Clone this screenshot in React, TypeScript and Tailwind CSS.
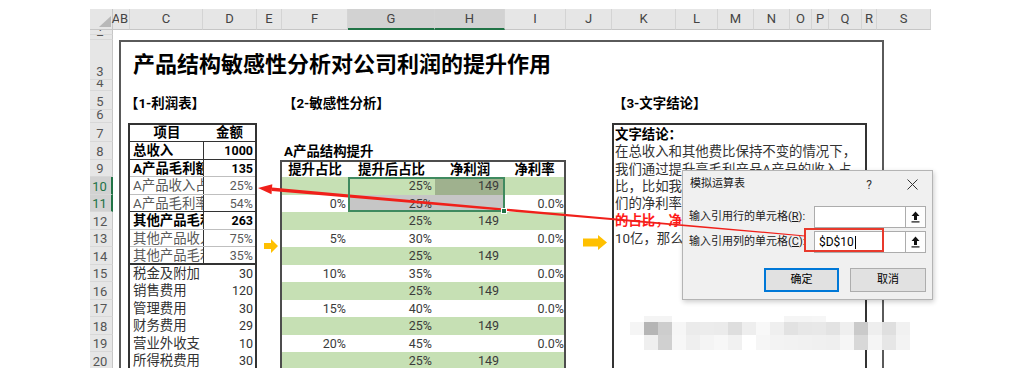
import React from 'react';

const COLS: [string, string, boolean][] = [
  ['A', 'w-[6px]', false],
  ['B', 'w-[11px]', false],
  ['C', 'w-[73px]', false],
  ['D', 'w-[54px]', false],
  ['E', 'w-[25px]', false],
  ['F', 'w-[66px]', false],
  ['G', 'w-[87px]', true],
  ['H', 'w-[70px]', true],
  ['I', 'w-[61px]', false],
  ['J', 'w-[46px]', false],
  ['K', 'w-[64px]', false],
  ['L', 'w-[42px]', false],
  ['M', 'w-[36px]', false],
  ['N', 'w-[36px]', false],
  ['O', 'w-[22px]', false],
  ['P', 'w-[17px]', false],
  ['Q', 'w-[33px]', false],
  ['R', 'w-[15px]', false],
  ['S', 'w-[54px]', false],
];

const ROWS: [string, string, boolean][] = [
  ['1', 'h-[5px]', false],
  ['2', 'h-[5px]', false],
  ['3', 'h-[40px]', false],
  ['4', 'h-[11px]', false],
  ['5', 'h-[19px]', false],
  ['6', 'h-[13px]', false],
  ['7', 'h-[19px]', false],
  ['8', 'h-[17.5px]', false],
  ['9', 'h-[17.5px]', false],
  ['10', 'h-[17.5px]', true],
  ['11', 'h-[17.5px]', true],
  ['12', 'h-[17.5px]', false],
  ['13', 'h-[17.5px]', false],
  ['14', 'h-[17.5px]', false],
  ['15', 'h-[17.5px]', false],
  ['16', 'h-[17.5px]', false],
  ['17', 'h-[17.5px]', false],
  ['18', 'h-[17.5px]', false],
  ['19', 'h-[17.5px]', false],
  ['20', 'h-[17.5px]', false],
];

// profit table, rows 8-20
const PROFIT = [
  { c: '总收入', d: '1000', text: 'font-bold text-black', line: 'border-b border-[#333]', split: true },
  { c: 'A产品毛利额', d: '135', text: 'font-bold text-black', line: 'border-b border-[#bfbfbf]', split: true },
  { c: 'A产品收入占比', d: '25%', text: 'text-[#595959]', line: 'border-b border-[#bfbfbf]', split: true },
  { c: 'A产品毛利率', d: '54%', text: 'text-[#595959]', line: 'border-b border-[#333]', split: true },
  { c: '其他产品毛利额', d: '263', text: 'font-bold text-black', line: 'border-b border-[#bfbfbf]', split: true },
  { c: '其他产品收入占比', d: '75%', text: 'text-[#595959]', line: 'border-b border-[#bfbfbf]', split: true },
  { c: '其他产品毛利率', d: '35%', text: 'text-[#595959]', line: 'border-b-2 border-[#333]', split: true },
  { c: '税金及附加', d: '30', text: 'text-[#333]', line: '', split: false },
  { c: '销售费用', d: '120', text: 'text-[#333]', line: '', split: false },
  { c: '管理费用', d: '30', text: 'text-[#333]', line: '', split: false },
  { c: '财务费用', d: '29', text: 'text-[#333]', line: '', split: false },
  { c: '营业外收支', d: '10', text: 'text-[#333]', line: '', split: false },
  { c: '所得税费用', d: '30', text: 'text-[#333]', line: '', split: false },
];

// sensitivity table, rows 10-20
const SENS = [
  { f: '', g: '25%', h: '149', i: '' },
  { f: '0%', g: '25%', h: '', i: '0.0%' },
  { f: '', g: '25%', h: '149', i: '' },
  { f: '5%', g: '30%', h: '', i: '0.0%' },
  { f: '', g: '25%', h: '149', i: '' },
  { f: '10%', g: '35%', h: '', i: '0.0%' },
  { f: '', g: '25%', h: '149', i: '' },
  { f: '15%', g: '40%', h: '', i: '0.0%' },
  { f: '', g: '25%', h: '149', i: '' },
  { f: '20%', g: '45%', h: '', i: '0.0%' },
  { f: '', g: '25%', h: '149', i: '' },
];

const NOTES = [
  { t: '文字结论：', cls: 'font-bold text-black' },
  { t: '在总收入和其他费比保持不变的情况下，', cls: '' },
  { t: '我们通过提升高毛利产品A产品的收入占', cls: '' },
  { t: '比，比如我们将A产品占比提升5%，我', cls: '' },
  { t: '们的净利率会提升0.6%，通过提升A产品', cls: '' },
  { t: '的占比，净利润提升明显，如果收入为', cls: 'font-bold text-[#ff1a1a]' },
  { t: '10亿，那么净利润将增加600万。', cls: '' },
];

const MOSAIC: string[][] = [
  ['', 'bg-[#f4f4f4]', 'bg-[#f4f4f4]', '', '', '', '', '', '', '', '', 'bg-[#f5f5f5]', 'bg-[#f5f5f5]', 'bg-[#f6f6f6]', '', '', '', '', '', ''],
  ['bg-[#f5f5f5]', 'bg-[#b5b5b5]', 'bg-[#cdcdcd]', 'bg-[#f6f6f6]', 'bg-[#ebebeb]', 'bg-[#ececec]', 'bg-[#ebebeb]', 'bg-[#dedede]', 'bg-[#eeeeee]', 'bg-[#f8f8f8]', 'bg-[#efefef]', 'bg-[#e2e2e2]', 'bg-[#e7e7e7]', 'bg-[#e8e8e8]', 'bg-[#e3e3e3]', 'bg-[#efefef]', 'bg-[#cacaca]', 'bg-[#eeeeee]', 'bg-[#dfdfdf]', 'bg-[#f1f1f1]'],
  ['', 'bg-[#efefef]', 'bg-[#d0d0d0]', 'bg-[#f7f7f7]', 'bg-[#efefef]', 'bg-[#f4f4f4]', 'bg-[#f7f7f7]', 'bg-[#f1f1f1]', '', 'bg-[#f6f6f6]', 'bg-[#f3f3f3]', 'bg-[#f2f2f2]', 'bg-[#f1f1f1]', 'bg-[#f0f0f0]', 'bg-[#efefef]', 'bg-[#f6f6f6]', 'bg-[#d8d8d8]', 'bg-[#f5f5f5]', 'bg-[#e6e6e6]', 'bg-[#f3f3f3]'],
];

function CollapseIcon() {
  return (
    <svg width="9" height="12" viewBox="0 0 9 12">
      <path d="M4.5 0.5 L8.5 5 H6 V9 H3 V5 H0.5 Z" fill="#111" />
      <rect x="0.5" y="10.3" width="8" height="1.2" fill="#111" />
    </svg>
  );
}

function RangeInput({ value }: { value?: string }) {
  return (
    <>
      <div className="flex h-full w-[92px] items-center border border-[#acacac] bg-white pl-[4px] text-[12px] text-black">
        {value}
        {value && <span className="ml-px h-[13px] w-px bg-black" />}
      </div>
      <div className="flex h-full w-[20px] items-center justify-center border border-l-0 border-[#acacac] bg-[#fdfdfd]">
        <CollapseIcon />
      </div>
    </>
  );
}

export default function App() {
  return (
    <div className="relative h-[381px] w-[1030px] overflow-hidden bg-white font-[family-name:Roboto,'Noto_Sans_CJK_SC',sans-serif]">
      <div className="pl-[90px] pt-[9px]">
        <div className="grid h-[359px] w-[841px] grid-cols-[23px_6px_11px_73px_54px_25px_66px_87px_70px_61px_46px_64px_42px_36px_36px_22px_17px_33px_15px_54px] grid-rows-[21px_5px_5px_40px_11px_19px_13px_19px_repeat(13,17.5px)] overflow-hidden bg-white">
          {/* column headers */}
          <div className="col-[1/-1] row-[1/2] flex">
            <div className="flex w-[23px] items-end justify-end border-b border-r border-[#c6c6c6] bg-[#e6e6e6] pb-[2px] pr-[1px]">
              <svg width="12" height="11" viewBox="0 0 12 11">
                <polygon points="12,0 12,11 0,11" fill="#b8b8b8" />
              </svg>
            </div>
            {COLS.map(([name, w, sel]) => (
              <div
                key={name}
                className={`${w} flex shrink-0 items-center justify-center overflow-visible whitespace-nowrap text-[13px] text-[#444] ${name === 'A' ? '' : 'border-r border-r-[#d4d4d4]'} ${sel ? 'border-b-2 border-b-[#217346] bg-[#d2d2d2]' : 'border-b border-b-[#c6c6c6] bg-[#e6e6e6]'}`}
              >
                {name}
              </div>
            ))}
          </div>

          {/* row headers */}
          <div className="col-[1/2] row-[2/22] flex flex-col">
            {ROWS.map(([n, h, sel]) => (
              <div
                key={n}
                className={`${h} flex shrink-0 items-end justify-center overflow-hidden border-b border-b-[#d8d8d8] pb-px pr-[2px] text-[13px] leading-[13px] ${sel ? 'border-r-2 border-r-[#217346] bg-[#d2d2d2] text-[#217346]' : 'border-r border-r-[#c6c6c6] bg-[#e6e6e6] text-[#555]'}`}
              >
                {n}
              </div>
            ))}
          </div>

          {/* outer frame */}
          <div className="col-[3/21] row-[4/22] mr-[47px] border-x-2 border-t-2 border-[#5a5a5a]" />

          <div className="col-[4/21] row-[4/5] flex items-end whitespace-nowrap pl-[3px] text-[22px] font-bold leading-[30px] text-black">
            产品结构敏感性分析对公司利润的提升作用
          </div>

          <div className="col-[3/7] row-[6/7] flex items-end whitespace-nowrap pl-[6px] text-[13.4px] font-bold leading-[12px] text-black">
            【1-利润表】
          </div>
          <div className="col-[7/11] row-[6/7] flex items-end whitespace-nowrap pl-[1px] text-[13.4px] font-bold leading-[12px] text-black">
            【2-敏感性分析】
          </div>
          <div className="col-[12/21] row-[6/7] flex items-end whitespace-nowrap pl-[1px] text-[13.4px] font-bold leading-[12px] text-black">
            【3-文字结论】
          </div>

          {/* 1 - profit table */}
          <div className="col-[4/6] row-[8/22] -ml-[2px] flex flex-col border-x-2 border-[#333] text-[13.4px]">
            <div className="flex h-[19px] shrink-0 border-b border-t-2 border-[#333] font-bold leading-[16px] text-black">
              <div className="w-[74px] text-center">项目</div>
              <div className="flex-1 text-center">金额</div>
            </div>
            {PROFIT.map((r) => (
              <div key={r.c} className={`flex h-[17.5px] shrink-0 leading-[17px] ${r.line} ${r.text}`}>
                <div className={`w-[74px] overflow-hidden whitespace-nowrap pl-[3px] ${r.split ? 'border-r border-r-[#333]' : ''}`}>{r.c}</div>
                <div className="flex-1 pr-[2px] text-right text-[12.5px]">{r.d}</div>
              </div>
            ))}
          </div>

          {/* 2 - sensitivity */}
          <div className="col-[7/11] row-[9/10] flex items-center whitespace-nowrap pl-[2px] pt-[2px] text-[13.4px] font-bold text-black">
            A产品结构提升
          </div>
          <div className="col-[7/11] row-[10/22] -ml-[2px] flex flex-col border-x-2 border-[#4d4d4d] text-[#3b3b3b]">
            <div className="grid h-[17.5px] shrink-0 grid-cols-[66px_87px_70px_1fr] border-t-2 border-[#4d4d4d] text-center text-[13.4px] font-bold leading-[16px] text-black">
              <div>提升占比</div>
              <div>提升后占比</div>
              <div>净利润</div>
              <div>净利率</div>
            </div>
            {SENS.map((r, i) => (
              <div
                key={i}
                className={`grid h-[17.5px] shrink-0 grid-cols-[66px_87px_70px_1fr] text-right text-[12.5px] leading-[17.5px] ${i % 2 === 0 ? 'bg-[#c6e0b4]' : 'bg-white'}`}
              >
                <div className="pr-[2px]">{r.f}</div>
                <div className={`pr-[3px] ${i === 1 ? 'bg-[#c6c6c6]' : ''}`}>{r.g}</div>
                <div className={`pr-[6px] ${i === 0 ? 'bg-[#9fb18e]' : i === 1 ? 'bg-[#c6c6c6]' : ''}`}>{r.h}</div>
                <div className="whitespace-nowrap">{r.i}</div>
              </div>
            ))}
          </div>

          {/* selection G10:H11 */}
          <div className="relative z-10 col-[8/10] row-[11/13] border-2 border-[#3f8a5f]">
            <div className="absolute -bottom-[4px] -right-[4px] h-[6px] w-[6px] border border-white bg-[#217346]" />
          </div>

          {/* yellow arrows */}
          <div className="col-[6/7] row-[14/16] flex items-center justify-center pb-[3px] pl-[3px]">
            <svg width="14" height="14" viewBox="0 0 14 14">
              <polygon points="0,4 7,4 7,0 14,7 7,14 7,10 0,10" fill="#ffc000" />
            </svg>
          </div>
          <div className="col-[11/12] row-[14/16] flex items-center justify-center pb-[9px] pl-[12px]">
            <svg width="24" height="15" viewBox="0 0 24 15">
              <polygon points="0,3.5 15,3.5 15,0 24,7.5 15,15 15,11.5 0,11.5" fill="#ffc000" />
            </svg>
          </div>

          {/* 3 - notes */}
          <div className="col-[12/21] row-[8/22] mr-[64px] flex flex-col border-x-2 border-t-2 border-[#333] pl-[1px] pt-[1px] text-[13.4px] leading-[17.3px] text-[#333]">
            {NOTES.map((n) => (
              <div key={n.t} className={`overflow-hidden whitespace-nowrap ${n.cls}`}>{n.t}</div>
            ))}
          </div>
        </div>
      </div>

      {/* blurred watermark */}
      <div className="absolute left-[630px] top-[316px] flex flex-col">
        {MOSAIC.map((row, ri) => (
          <div key={ri} className={`flex ${ri === 0 ? 'h-[6px]' : ri === 1 ? 'h-[13px]' : 'h-[15px]'}`}>
            {row.map((c, ci) => (
              <div key={ci} className={`h-full w-[14px] ${c}`} />
            ))}
          </div>
        ))}
      </div>

      {/* data table dialog */}
      <div className="absolute left-[682px] top-[170px] h-[130px] w-[251px] border border-[#b4b4b4] bg-[#f0f0f0] text-[11px] text-[#1a1a1a] shadow-[1px_2px_5px_rgba(0,0,0,0.2)]">
        <div className="flex h-[27px] items-center pl-[7px]">
          <span className="flex-1">模拟运算表</span>
          <span className="text-[12px] text-[#333]">?</span>
          <span className="ml-[35px] mr-[14px] flex">
            <svg width="11" height="11" viewBox="0 0 11 11">
              <path d="M0.5 0.5L10.5 10.5M10.5 0.5L0.5 10.5" stroke="#333" strokeWidth="1" />
            </svg>
          </span>
        </div>
        <div className="flex flex-col px-[6px] pt-[8px]">
          <div className="flex h-[22px] items-center">
            <span className="flex-1 whitespace-nowrap">
              输入引用行的单元格(<span className="underline">R</span>):
            </span>
            <RangeInput />
          </div>
          <div className="mt-[3px] flex h-[22px] items-center">
            <span className="flex-1 whitespace-nowrap">
              输入引用列的单元格(<span className="underline">C</span>):
            </span>
            <RangeInput value="$D$10" />
          </div>
          <div className="mt-[15px] flex h-[24px] justify-end gap-[11px]">
            <button className="w-[75px] border-2 border-[#0078d7] bg-[#e1e1e1] text-[11px] text-black">确定</button>
            <button className="w-[76px] border border-[#adadad] bg-[#e1e1e1] text-[11px] text-black">取消</button>
          </div>
        </div>
      </div>

      {/* annotation: red box + arrow */}
      <div className="absolute left-[804px] top-[228px] h-[24px] w-[80px] border-2 border-[#e8392c]" />
      <svg className="pointer-events-none absolute left-0 top-0" width="1030" height="381" viewBox="0 0 1030 381">
        <polygon points="272.05,187.45 805.04,235.5 804.96,236.5 271.75,190.95" fill="#f0201a" />
        <polygon points="258,188 272.3,184.2 271.5,194.2" fill="#f0201a" />
      </svg>
    </div>
  );
}
